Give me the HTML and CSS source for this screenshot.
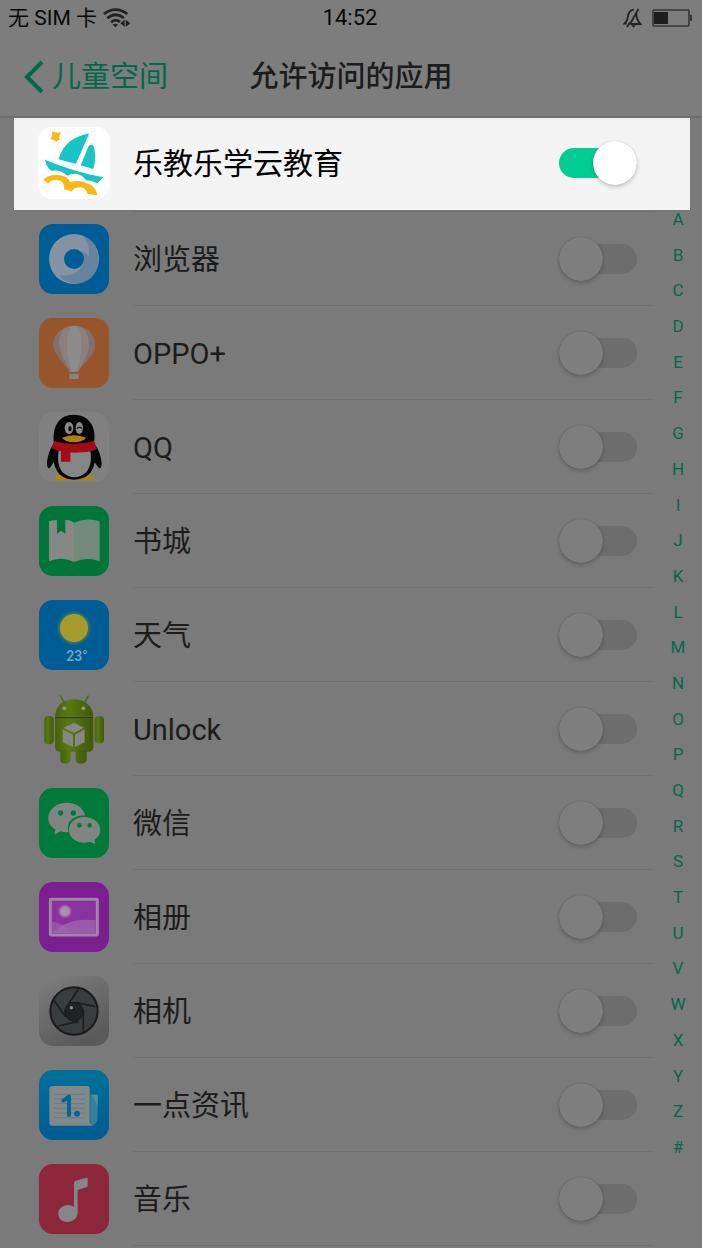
FILE: index.html
```html
<!DOCTYPE html>
<html lang="zh-CN">
<head>
<meta charset="utf-8">
<meta name="viewport" content="width=device-width, initial-scale=1">
<title>允许访问的应用</title>
<link rel="stylesheet" href="styles.css">
</head>
<body>
<div class="status">
  <div class="status-left">
    <span>无 SIM 卡</span>
    <svg class="wifi" viewBox="0 0 84 60" aria-hidden="true">
      <g fill="none" stroke="#222" stroke-width="8">
        <path d="M3 18Q37-8 73 18"/><path d="M13 31Q37 10 63 30"/><path d="M24 43Q38 30 51 42"/>
      </g>
      <path fill="#222" d="M29 50Q37 44 45 50L37 58ZM52 46L65 35V57ZM68 35V57L82 46Z"/>
    </svg>
  </div>
  <time class="clock">14:52</time>
  <div class="status-right">
    <svg class="bell" viewBox="0 0 56 60" aria-hidden="true">
      <g fill="none" stroke="#242424" stroke-width="5.5">
        <path d="M32 5Q16 7 14 27Q13 39 4 47H11M20 49L46 3M39 17Q41 38 52 48H23M12 57L20 43"/>
      </g><path fill="#242424" d="M24 52h14l-7 7z"/>
    </svg>
    <svg class="battery" viewBox="0 0 40 18" aria-hidden="true">
      <rect x="1" y="1" width="36" height="16" rx="1" fill="none" stroke="#363636" stroke-width="1.6"/>
      <rect x="2" y="3" width="14" height="12" fill="#1d1d1d"/><path d="M38 6h2v6h-2z" fill="#363636"/>
    </svg>
  </div>
</div>
<header class="header">
  <a class="back" href="#">
    <svg class="chevron" viewBox="0 0 20 34" aria-hidden="true"><path d="M18 2L3 17L18 32" fill="none" stroke="#00694c" stroke-width="4"/></svg>
    <span>儿童空间</span>
  </a>
  <h1 class="title">允许访问的应用</h1>
</header>
<section class="featured">
  <svg class="icon" viewBox="0 0 216 216" aria-hidden="true">
    <rect width="216" height="216" rx="42" fill="#fff"/>
    <path fill="#fdb80f" d="M42 12Q54 20 70 15Q61 26 65 39Q59 38 55 45Q49 37 36 36Q46 28 42 12Z"/>
    <path fill="#19c4c7" d="M153 20L114 110Q86 105 62 97Q70 65 96 43Q119 26 148 20ZM152 57Q163 45 169 65Q175 96 166 126L128 115ZM21 98Q106 134 196 151L178 169Q160 160 143 159Q134 142 112 140Q97 140 88 146Q69 127 40 131Q24 119 21 98Z"/>
    <path fill="#fdb80f" d="M16 159Q31 142 59 144Q91 147 97 166Q126 157 151 170Q175 181 178 205L149 201Q145 183 128 181Q108 181 101 193L78 187Q81 164 62 160Q43 156 30 169Z"/>
  </svg>
  <label class="name" for="app-0">乐教乐学云教育</label>
  <input class="switch" id="app-0" type="checkbox" role="switch" checked>
</section>
<main class="main">
  <ul class="apps">
    <li class="app">
      <svg class="icon" viewBox="0 0 210 210" aria-hidden="true">
        <rect width="210" height="210" rx="42" fill="#005c94"/>
        <circle cx="105" cy="105" r="75" fill="#8494a3"/>
        <path fill="#607e9c" d="M130 34Q182 56 178 117Q170 168 122 178Q78 181 62 154Q109 162 132 123Q142 100 123 80Q141 84 150 99Q154 58 130 34Z" opacity=".8"/>
        <circle cx="105" cy="105" r="30" fill="#005c94"/>
      </svg>
      <div class="body"><label class="name" for="app-1">浏览器</label><input class="switch" id="app-1" type="checkbox" role="switch"></div>
    </li>
    <li class="app">
      <svg class="icon" viewBox="0 0 210 210" aria-hidden="true">
        <rect width="210" height="210" rx="42" fill="#96552a"/>
        <path fill="#83706d" d="M105 23C63 23 39 57 44 88C50 120 78 135 91 161H119C133 133 164 119 168 88C172 51 145 23 105 23Z"/>
        <path fill="#8a807e" d="M105 23C68 23 56 57 63 93C69 122 86 139 94 161H117C129 137 143 120 149 91C154 54 140 23 105 23Z"/>
        <path fill="#8c8c8c" d="M105 23C85 29 83 58 84 92Q88 133 98 161H113Q123 132 127 92C128 57 125 29 105 23Z"/>
        <path fill="#858585" d="M91 167h28v12q0 4-4 4H95q-4 0-4-4z"/>
      </svg>
      <div class="body"><label class="name" for="app-2">OPPO+</label><input class="switch" id="app-2" type="checkbox" role="switch"></div>
    </li>
    <li class="app">
      <svg class="icon" viewBox="0 0 210 210" aria-hidden="true">
        <rect width="210" height="210" rx="42" fill="#808080"/>
        <path fill="#b38210" d="M45 199Q48 187 78 187H137Q163 190 168 199Q163 205 132 205H76Q48 205 45 199Z"/>
        <path fill="#050505" d="M45 93C39 43 60 8 104 8C149 8 174 43 165 93Q185 120 188 154Q187 173 179 168L167 151Q158 202 105 203Q55 202 44 150L34 166Q24 176 24 151Q27 118 45 93Z"/>
        <path fill="#858585" d="M60 112Q105 130 153 112Q162 155 142 181Q106 211 70 181Q51 156 60 112Z"/>
        <path fill="#a30b16" d="M45 87Q104 105 165 87L174 111Q149 124 94 121V149H66V118Q48 114 38 109Z"/>
        <ellipse cx="90" cy="48" rx="13" ry="18" fill="#8b8b8b"/><ellipse cx="121" cy="48" rx="11" ry="18" fill="#8b8b8b"/>
        <ellipse cx="93" cy="50" rx="5" ry="8" fill="#080808"/><path d="M114 50Q121 41 128 50" fill="none" stroke="#080808" stroke-width="4"/>
        <path fill="#ae8016" d="M69 77Q104 62 141 77Q132 90 105 91Q77 89 69 77Z"/>
      </svg>
      <div class="body"><label class="name" for="app-3">QQ</label><input class="switch" id="app-3" type="checkbox" role="switch"></div>
    </li>
    <li class="app">
      <svg class="icon" viewBox="0 0 210 210" aria-hidden="true">
        <rect width="210" height="210" rx="42" fill="#00753a"/>
        <path fill="#858985" d="M30 46Q42 41 54 43V83L66 74L79 83V41Q93 41 105 50V168Q67 150 30 166Z"/>
        <path fill="#728a7c" d="M105 50Q143 34 182 46V166Q143 151 105 168Z"/>
      </svg>
      <div class="body"><label class="name" for="app-4">书城</label><input class="switch" id="app-4" type="checkbox" role="switch"></div>
    </li>
    <li class="app">
      <svg class="icon" viewBox="0 0 210 210" aria-hidden="true">
        <defs><radialGradient id="sun"><stop offset=".78" stop-color="#3d785f"/><stop offset="1" stop-color="#005c94"/></radialGradient></defs>
        <rect width="210" height="210" rx="42" fill="#005c94"/>
        <circle cx="105" cy="84" r="53" fill="url(#sun)"/><circle cx="105" cy="84" r="42" fill="#a89b2d"/>
        <text class="degree" x="82" y="182">23°</text>
      </svg>
      <div class="body"><label class="name" for="app-5">天气</label><input class="switch" id="app-5" type="checkbox" role="switch"></div>
    </li>
    <li class="app">
      <svg class="icon" viewBox="0 0 210 210" aria-hidden="true">
        <defs><linearGradient id="robot" x2="1"><stop stop-color="#46610a"/><stop offset=".35" stop-color="#587911"/><stop offset="1" stop-color="#405808"/></linearGradient></defs>
        <g fill="url(#robot)">
          <path d="M48 68C50 35 73 16 105 16S162 36 163 68Z"/>
          <path d="M48 73H163V158Q163 173 148 173H65Q48 173 48 158Z"/>
          <rect x="16" y="66" width="28" height="85" rx="12"/><rect x="167" y="66" width="28" height="82" rx="12"/>
          <path d="M64 168H95V196Q94 209 79 209T64 196ZM110 168H143V196Q142 209 126 209T110 196Z"/>
        </g>
        <path d="M48 71H163" stroke="#2e3d0b" stroke-width="4"/>
        <path d="M75 26L65 6M137 26L147 6" stroke="#4d6b10" stroke-width="5" stroke-linecap="round"/>
        <circle cx="76" cy="43" r="6" fill="#8c9777"/><circle cx="133" cy="43" r="6" fill="#8c9777"/>
        <path fill="#858885" d="M105 86L135 101L105 117L73 101ZM71 106L102 122V159L71 145ZM108 122L137 106V145L108 159Z"/>
      </svg>
      <div class="body"><label class="name" for="app-6">Unlock</label><input class="switch" id="app-6" type="checkbox" role="switch"></div>
    </li>
    <li class="app">
      <svg class="icon" viewBox="0 0 210 210" aria-hidden="true">
        <rect width="210" height="210" rx="42" fill="#007a3a"/>
        <path fill="#818581" d="M84 44C51 44 28 64 28 90C28 106 36 117 49 125L46 140L64 130Q76 134 89 132C79 102 106 80 138 83C135 61 113 44 84 44Z"/>
        <path fill="#818581" d="M136 87C108 87 90 104 90 125C90 148 111 165 138 164L154 161L169 169L166 155C178 148 184 137 184 125C184 104 163 87 136 87Z"/>
        <g fill="#007a3a"><circle cx="65" cy="75" r="8"/><circle cx="103" cy="75" r="8"/><circle cx="121" cy="112" r="7"/><circle cx="152" cy="112" r="7"/></g>
      </svg>
      <div class="body"><label class="name" for="app-7">微信</label><input class="switch" id="app-7" type="checkbox" role="switch"></div>
    </li>
    <li class="app">
      <svg class="icon" viewBox="0 0 210 210" aria-hidden="true">
        <defs><radialGradient id="moon"><stop offset=".5" stop-color="#ae8fb4"/><stop offset="1" stop-color="#8933a0"/></radialGradient></defs>
        <rect width="210" height="210" rx="42" fill="#7b1e90"/>
        <rect x="34" y="52" width="141" height="107" rx="2" fill="#8933a0" stroke="#a085a6" stroke-width="9"/>
        <circle cx="78" cy="88" r="22" fill="url(#moon)"/>
        <path fill="#9752a8" d="M39 119Q65 120 108 154H39Z"/><path fill="#9f66ad" d="M39 154Q88 104 170 115V154Z" opacity=".8"/>
      </svg>
      <div class="body"><label class="name" for="app-8">相册</label><input class="switch" id="app-8" type="checkbox" role="switch"></div>
    </li>
    <li class="app">
      <svg class="icon" viewBox="0 0 210 210" aria-hidden="true">
        <defs><linearGradient id="metal" x2=".5" y2="1"><stop stop-color="#7e7e7e"/><stop offset="1" stop-color="#5a5a5a"/></linearGradient></defs>
        <rect width="210" height="210" rx="42" fill="url(#metal)"/>
        <circle cx="105" cy="105" r="71" fill="#393d3e" stroke="#1a1a1a" stroke-width="6"/>
        <path d="M118 39L87 86M42 69L80 122M58 150L119 136M133 168V102M168 91L109 80" stroke="#1c1e1f" stroke-width="5"/>
        <circle cx="105" cy="107" r="28" fill="#202324" stroke="#171919" stroke-width="3"/><circle cx="97" cy="95" r="5" fill="#909090"/>
      </svg>
      <div class="body"><label class="name" for="app-9">相机</label><input class="switch" id="app-9" type="checkbox" role="switch"></div>
    </li>
    <li class="app">
      <svg class="icon" viewBox="0 0 210 210" aria-hidden="true">
        <defs><linearGradient id="news" x2="0" y2="1"><stop stop-color="#00719a"/><stop offset="1" stop-color="#005b91"/></linearGradient></defs>
        <rect width="210" height="210" rx="42" fill="url(#news)"/>
        <path fill="#367f98" d="M154 74H176V139Q176 167 154 167Z"/><path fill="#5a91a0" d="M160 74H176V107Z"/>
        <path fill="#82898b" d="M39 48H144Q152 48 152 57V154Q153 165 163 167H40Q31 167 31 158V57Q31 48 39 48Z"/>
        <path d="M45 73H138M45 87H138M45 101H138M45 115H138M45 129H138M45 143H138" stroke="#6e7a81" stroke-width="3"/>
        <path fill="none" stroke="#006894" stroke-width="12" stroke-linecap="round" stroke-linejoin="round" d="M73 92L90 80V135"/>
        <circle cx="114" cy="131" r="9" fill="#006894"/>
      </svg>
      <div class="body"><label class="name" for="app-10">一点资讯</label><input class="switch" id="app-10" type="checkbox" role="switch"></div>
    </li>
    <li class="app">
      <svg class="icon" viewBox="0 0 210 210" aria-hidden="true">
        <rect width="210" height="210" rx="42" fill="#8c263b"/>
        <path fill="#858585" d="M105 56Q105 53 109 51L142 41Q146 40 146 44V65Q146 69 142 70L116 78V145C117 161 103 174 85 174C69 174 58 164 58 150C58 134 71 123 87 123Q98 123 105 128Z"/>
      </svg>
      <div class="body"><label class="name" for="app-11">音乐</label><input class="switch" id="app-11" type="checkbox" role="switch"></div>
    </li>
  </ul>
  <nav class="index" aria-label="字母索引">
    <a href="#">A</a><a href="#">B</a><a href="#">C</a><a href="#">D</a><a href="#">E</a><a href="#">F</a><a href="#">G</a><a href="#">H</a><a href="#">I</a><a href="#">J</a><a href="#">K</a><a href="#">L</a><a href="#">M</a><a href="#">N</a><a href="#">O</a><a href="#">P</a><a href="#">Q</a><a href="#">R</a><a href="#">S</a><a href="#">T</a><a href="#">U</a><a href="#">V</a><a href="#">W</a><a href="#">X</a><a href="#">Y</a><a href="#">Z</a><a href="#">#</a>
  </nav>
</main>
</body>
</html>
```
FILE: styles.css
```css
* { box-sizing: border-box; }

body {
  margin: 0;
  min-height: 100vh;
  background: #7a7a7a;
  color: #1c1c1c;
  font-family: Roboto, "Noto Sans CJK SC", sans-serif;
  font-size: 29px;
}

a { color: inherit; text-decoration: none; }

.status {
  display: grid;
  grid-template-columns: 1fr auto 1fr;
  align-items: center;
  height: 38px;
  padding: 0 10px 2px 8px;
  background: #7d7d7d;
  color: #080808;
  font-size: 21px;
  line-height: 24px;
}
.status-left { display: flex; align-items: center; gap: 6px; }
.status-right { display: flex; align-items: center; justify-content: flex-end; gap: 10px; }
.clock { font-size: 22px; }
.wifi { width: 28px; height: 20px; }
.bell { width: 19px; height: 20px; }
.battery { width: 40px; height: 18px; }

.header {
  display: grid;
  grid-template-columns: 1fr auto 1fr;
  align-items: center;
  height: 80px;
  padding: 0 24px;
  background: #7d7d7d;
  border-bottom: 2px solid #6e6e6e;
  line-height: 34px;
}
.back { display: flex; align-items: center; gap: 8px; color: #00694c; }
.chevron { width: 20px; height: 34px; }
.title { margin: 0; font-size: 29px; font-weight: 500; }

.featured {
  display: flex;
  align-items: center;
  height: 92px;
  margin: 0 12px 1px 14px;
  padding: 0 53px 2px 24px;
  background: #f4f4f4;
  color: #000;
}
.featured .icon { width: 72px; height: 72px; margin-right: 23px; }
.featured .name { font-size: 30px; }

.main { display: flex; }
.apps {
  flex: 1;
  margin: 0;
  padding: 0;
  list-style: none;
}
.apps::before {
  content: "";
  display: block;
  height: 1px;
  margin-left: 133px;
  background: #727272;
}
.app { display: flex; align-items: center; height: 94px; padding-left: 39px; }
.icon { flex: none; width: 70px; height: 70px; margin-right: 24px; }
.body {
  display: flex;
  flex: 1;
  align-items: center;
  align-self: stretch;
  padding-right: 17px;
  border-bottom: 1px solid #707070;
}
.name { flex: 1; padding-top: 2px; line-height: 34px; }
.degree { fill: #7ba6ba; font: 500 42px Roboto, sans-serif; }

.switch {
  appearance: none;
  display: flex;
  align-items: center;
  width: 78px;
  height: 30px;
  margin: 0;
  border-radius: 15px;
  background: #6d6d6d;
}
.switch::before {
  content: "";
  width: 44px;
  height: 44px;
  border-radius: 50%;
  background: #7e7e7e;
  box-shadow: 0 2px 4px rgba(0, 0, 0, .2), 0 0 1px rgba(0, 0, 0, .3);
}
.switch:checked { justify-content: flex-end; background: #00cc94; }
.switch:checked::before { background: #fff; box-shadow: 0 2px 4px rgba(0, 0, 0, .2), 0 0 1px rgba(0, 0, 0, .2); }

.index {
  display: flex;
  flex-direction: column;
  justify-content: space-between;
  width: 48px;
  padding-bottom: 91px;
  color: #00694c;
  font-size: 17px;
  line-height: 16px;
  text-align: center;
}
```
